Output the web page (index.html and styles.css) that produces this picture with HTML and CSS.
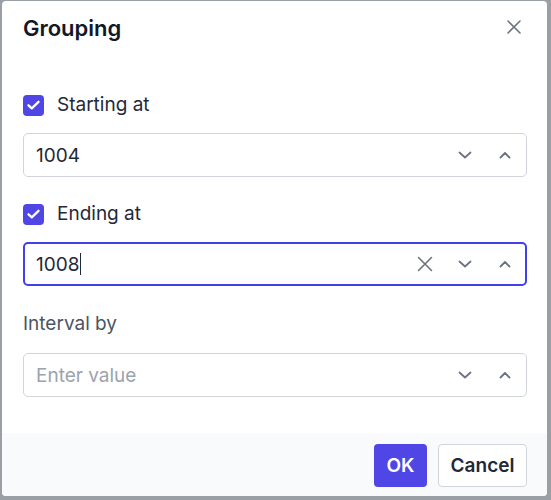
FILE: index.html
```html
<!DOCTYPE html>
<html lang="en">
<head>
<meta charset="utf-8">
<title>Grouping</title>
<link rel="stylesheet" href="styles.css">
</head>
<body>
<div class="dialog">
  <div class="header">
    <h2 class="title">Grouping</h2>
    <button class="close" aria-label="Close">
      <svg width="14" height="14" viewBox="0 0 14 14"><path d="M1 1L13 13M13 1L1 13" stroke="#6b7280" stroke-width="1.6" stroke-linecap="round"/></svg>
    </button>
  </div>
  <div class="content">
    <div class="field">
      <label class="check-row">
        <span class="checkbox"><svg width="13" height="10" viewBox="0 0 13 10"><path d="M1.5 5.3L4.8 8.3L11.5 1.8" fill="none" stroke="#fff" stroke-width="2.3" stroke-linecap="round" stroke-linejoin="round"/></svg></span>
        <span class="label-text">Starting at</span>
      </label>
      <div class="input">
        <span class="value">1004</span>
        <span class="icons">
          <span class="icon"><svg width="14" height="8" viewBox="0 0 14 8"><path d="M1.5 1.5L7 6.5L12.5 1.5" fill="none" stroke="#6b7280" stroke-width="1.8" stroke-linecap="round" stroke-linejoin="round"/></svg></span>
          <span class="icon"><svg width="14" height="8" viewBox="0 0 14 8"><path d="M2.5 6.5L7 2L11.5 6.5" fill="none" stroke="#6b7280" stroke-width="1.8" stroke-linecap="round" stroke-linejoin="round"/></svg></span>
        </span>
      </div>
    </div>
    <div class="field">
      <label class="check-row">
        <span class="checkbox"><svg width="13" height="10" viewBox="0 0 13 10"><path d="M1.5 5.3L4.8 8.3L11.5 1.8" fill="none" stroke="#fff" stroke-width="2.3" stroke-linecap="round" stroke-linejoin="round"/></svg></span>
        <span class="label-text">Ending at</span>
      </label>
      <div class="input focused">
        <span class="value">1008<span class="caret"></span></span>
        <span class="icons">
          <span class="icon"><svg width="16" height="16" viewBox="0 0 16 16"><path d="M1.5 1.5L14.5 14.5M14.5 1.5L1.5 14.5" stroke="#6b7280" stroke-width="1.6" stroke-linecap="round"/></svg></span>
          <span class="icon"><svg width="14" height="8" viewBox="0 0 14 8"><path d="M1.5 1.5L7 6.5L12.5 1.5" fill="none" stroke="#6b7280" stroke-width="1.8" stroke-linecap="round" stroke-linejoin="round"/></svg></span>
          <span class="icon"><svg width="14" height="8" viewBox="0 0 14 8"><path d="M2.5 6.5L7 2L11.5 6.5" fill="none" stroke="#6b7280" stroke-width="1.8" stroke-linecap="round" stroke-linejoin="round"/></svg></span>
        </span>
      </div>
    </div>
    <div class="field">
      <div class="plain-label">Interval by</div>
      <div class="input">
        <span class="value placeholder">Enter value</span>
        <span class="icons">
          <span class="icon"><svg width="14" height="8" viewBox="0 0 14 8"><path d="M1.5 1.5L7 6.5L12.5 1.5" fill="none" stroke="#6b7280" stroke-width="1.8" stroke-linecap="round" stroke-linejoin="round"/></svg></span>
          <span class="icon"><svg width="14" height="8" viewBox="0 0 14 8"><path d="M2.5 6.5L7 2L11.5 6.5" fill="none" stroke="#6b7280" stroke-width="1.8" stroke-linecap="round" stroke-linejoin="round"/></svg></span>
        </span>
      </div>
    </div>
  </div>
  <div class="footer">
    <button class="btn primary">OK</button>
    <button class="btn secondary">Cancel</button>
  </div>
</div>
</body>
</html>
```
FILE: styles.css
```css
html, body {
  margin: 0;
  padding: 0;
  height: 100%;
  background: #9a9ea5;
}
body {
  font-family: Inter, "Noto Sans", "Liberation Sans", sans-serif;
  color: #1f2937;
  overflow: hidden;
}
.dialog {
  margin: 1px 0 0 2px;
  width: 545px;
  height: 495px;
  background: #ffffff;
  border-radius: 4px;
  overflow: hidden;
  display: flex;
  flex-direction: column;
  box-sizing: border-box;
}
.header {
  display: flex;
  justify-content: space-between;
  align-items: flex-start;
  padding: 14px 21px 0 21px;
  height: 40px;
  box-sizing: border-box;
}
.title {
  margin: 0;
  font-size: 22px;
  line-height: 26px;
  font-weight: 600;
  color: #111827;
}
.close {
  width: 24px;
  height: 24px;
  padding: 0;
  border: 0;
  background: none;
  display: flex;
  align-items: center;
  justify-content: center;
}
.content {
  padding: 53px 20px 0 21px;
  display: flex;
  flex-direction: column;
  gap: 26px;
}
.field {
  display: flex;
  flex-direction: column;
  gap: 17px;
}
.check-row {
  display: flex;
  align-items: center;
  gap: 13px;
  height: 22px;
}
.checkbox {
  width: 21px;
  height: 21px;
  border-radius: 4px;
  background: #4f46e5;
  display: flex;
  align-items: center;
  justify-content: center;
}
.label-text {
  font-size: 19px;
  line-height: 22px;
  color: #1f2937;
}
.plain-label {
  font-size: 19px;
  line-height: 24px;
  color: #4b5563;
}
.input {
  height: 44px;
  box-sizing: border-box;
  border: 1px solid #d1d5db;
  border-radius: 5px;
  display: flex;
  align-items: center;
  justify-content: space-between;
  padding: 0 1px 0 12px;
}
.input.focused {
  border: 2px solid #4040ee;
  padding: 0 0 0 11px;
}
.value {
  font-size: 19px;
  color: #1f2937;
  display: flex;
  align-items: center;
}
.placeholder {
  color: #9ca3af;
}
.caret {
  display: inline-block;
  width: 1px;
  height: 22px;
  background: #1f2937;
  margin-left: 1px;
}
.icons {
  display: flex;
  align-items: center;
}
.icon {
  width: 40px;
  height: 40px;
  display: flex;
  align-items: center;
  justify-content: center;
}
.footer {
  margin-top: auto;
  height: 63px;
  box-sizing: border-box;
  background: #f9fafb;
  display: flex;
  justify-content: flex-end;
  align-items: center;
  gap: 11px;
  padding: 2px 20px 0 0;
}
.btn {
  height: 43px;
  font-family: Inter, "Noto Sans", "Liberation Sans", sans-serif;
  font-size: 19px;
  font-weight: 600;
  border-radius: 4px;
  box-sizing: border-box;
  cursor: pointer;
}
.primary {
  background: #4f46e5;
  color: #ffffff;
  border: 0;
  width: 53px;
  padding: 0;
}
.secondary {
  background: #ffffff;
  color: #1f2937;
  border: 1px solid #d1d5db;
  width: 89px;
  padding: 0;
}
```
